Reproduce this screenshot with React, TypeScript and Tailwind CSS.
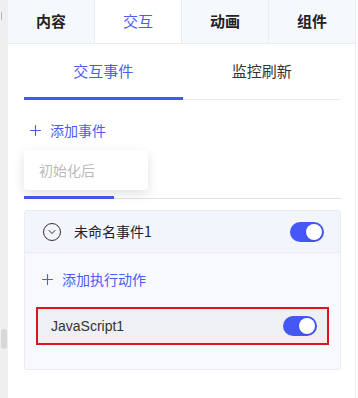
import { ChevronDown, Plus } from 'lucide-react'

const font = { fontFamily: '"Noto Sans CJK SC", "Noto Sans", sans-serif' }

function Toggle() {
  return (
    <div className="flex h-[20px] w-[34px] items-center justify-end rounded-full bg-[#4458f5] pr-[2px]">
      <div className="h-[16px] w-[16px] rounded-full bg-white shadow" />
    </div>
  )
}

export default function App() {
  const tabs = ['内容', '交互', '动画', '组件']

  return (
    <div className="flex h-[398px] w-[358px] bg-white text-[#222]" style={font}>
      {/* left scroll strip */}
      <div className="relative w-[8px] shrink-0 bg-[#efefef]">
        <div className="absolute left-[1px] top-[12px] h-[8px] w-[1px] bg-[#bbb]" />
        <div className="absolute left-[1px] top-[329px] h-[20px] w-[6px] rounded-full bg-[#d7d7d7]" />
      </div>

      <div className="flex w-[348px] flex-col border-r border-[#eceef2]">
        {/* top tabs */}
        <div className="flex h-[44px] border-b border-[#e9edf3] bg-[#f5f8fc]">
          {tabs.map((t, i) => (
            <div
              key={t}
              className={`flex flex-1 items-center justify-center text-[15px] font-bold ${
                i > 0 ? 'border-l border-[#e9edf3]' : ''
              } ${i === 1 ? 'bg-white font-normal text-[#4a5cf5]' : 'text-[#222]'}`}
            >
              {t}
            </div>
          ))}
        </div>

        <div className="pl-[16px] pr-[14px]">
          {/* sub tabs */}
          <div className="flex h-[56px] border-b border-[#ebebeb]">
            <div className="relative flex w-1/2 items-center justify-center text-[15px] text-[#4a5cf5]">
              交互事件
              <div className="absolute bottom-[-1px] left-0 right-0 h-[3px] bg-[#4458f5]" />
            </div>
            <div className="flex w-1/2 items-center justify-center text-[15px] text-[#333]">
              监控刷新
            </div>
          </div>

          {/* add event */}
          <div className="mt-[20px] flex items-center gap-[6px] pl-[3px] text-[14px] text-[#4a5cf5]">
            <Plus size={17} strokeWidth={1.6} />
            添加事件
          </div>

          {/* select with dropdown */}
          <div className="relative mt-[9px] h-[49px] border-b border-[#e4e4e4]">
            <div className="absolute bottom-[-1px] left-0 h-[3px] w-[90px] bg-[#4458f5]" />
            <div className="absolute left-0 top-0 flex h-[40px] w-[124px] items-center rounded-[3px] bg-white pl-[15px] text-[14px] text-[#bbbbbb] shadow-[0_4px_12px_rgba(0,0,0,0.12)]">
              初始化后
            </div>
          </div>

          {/* event card */}
          <div className="mt-[11px] rounded-[3px] border border-[#e8ebf1] bg-[#f8f9fe]">
            <div className="flex h-[42px] items-center border-b border-[#e8ebf1] bg-[#f3f5fc] pl-[18px] pr-[16px]">
              <div className="flex h-[18px] w-[18px] items-center justify-center rounded-full border-[1.5px] border-[#333]">
                <ChevronDown size={12} strokeWidth={2} className="text-[#333]" />
              </div>
              <span className="ml-[13px] flex-1 text-[14px] text-[#222]">未命名事件1</span>
              <Toggle />
            </div>

            <div className="flex items-center gap-[6px] pl-[14px] pt-[16px] text-[14px] text-[#4a5cf5]">
              <Plus size={17} strokeWidth={1.6} />
              添加执行动作
            </div>

            <div className="mx-[11px] mb-[24px] mt-[17px] flex h-[38px] items-center border-2 border-[#e0121f] bg-[#eff0f4] pl-[13px] pr-[10px]">
              <span className="flex-1 text-[14px] text-[#333]" style={{ fontFamily: '"Liberation Sans", Arial, sans-serif' }}>
                JavaScript1
              </span>
              <Toggle />
            </div>
          </div>
        </div>
      </div>
    </div>
  )
}
